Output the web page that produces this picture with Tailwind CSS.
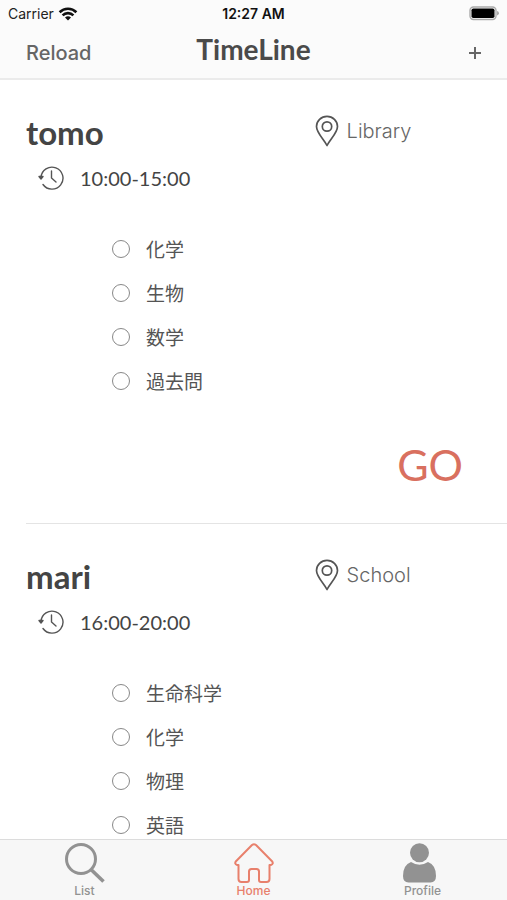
<!DOCTYPE html>
<html lang="ja">
<head>
    <meta charset="UTF-8">
    <meta name="viewport" content="width=device-width, initial-scale=1.0">
    <title>TimeLine</title>
    <script src="https://cdn.jsdelivr.net/npm/@tailwindcss/browser@4"></script>
</head>
<body class="h-screen flex flex-col bg-white text-[#555] font-['Inter','Noto_Sans_CJK_JP',sans-serif]">

    <!-- Top Bar -->
    <header class="shrink-0 bg-[#fbfbfb] border-b-2 border-[#ebebeb]">
        <div class="grid grid-cols-3 items-center h-7 pl-2 pr-2 text-sm text-[#222]">
            <div class="flex items-center gap-1">
                <span>Carrier</span>
                <svg class="w-5 h-4" viewBox="0 0 20 16" fill="none" stroke="#111" stroke-width="2.6">
                    <path d="M1.6 6.2a12 12 0 0 1 16.8 0"/>
                    <path d="M4.6 9.4a7.6 7.6 0 0 1 10.8 0"/>
                    <path d="M10 14.6l-3-3a4.3 4.3 0 0 1 6 0z" fill="#111" stroke="none"/>
                </svg>
            </div>
            <div class="text-center font-semibold text-[#111] whitespace-nowrap">12:27 AM</div>
            <svg class="justify-self-end w-[30px] h-4" viewBox="0 0 30 16">
                <rect x="1" y="1" width="26" height="12.500" rx="3.500" fill="#fbfbfb" stroke="#aaa" stroke-width="1.4"/>
                <rect x="2.500" y="2.500" width="23" height="9.500" rx="1.800" fill="#000"/>
                <path d="M28 5q2 .6 2 2.200t-2 2.200z" fill="#aaa"/>
            </svg>
        </div>
        <div class="grid grid-cols-3 items-center h-[50px] px-[26px] text-[#666]">
            <button type="button" class="justify-self-start text-xl font-medium">Reload</button>
            <h1 class="justify-self-center pb-2 text-[28px] font-bold leading-9 text-[#4a4a4a] font-['Lato',sans-serif]">TimeLine</h1>
            <button type="button" aria-label="Add" class="justify-self-end">
                <svg class="w-3 h-3" viewBox="0 0 12 12" stroke="#666" stroke-width="2">
                    <path d="M6 0v12M0 6h12"/>
                </svg>
            </button>
        </div>
    </header>

    <!-- Timeline -->
    <main class="flex-1 min-h-0 overflow-hidden pl-[26px]">
        <article class="pt-8 pb-6 border-b border-[#e4e4e4]">
            <div class="grid grid-cols-[3fr_2fr] h-11">
                <h2 class="self-start text-[33px] font-bold leading-10 text-[#444] font-['Lato',sans-serif]">tomo</h2>
                <div class="flex items-center gap-2 h-[38px] text-xl text-[#666]">
                    <svg class="w-6 h-8" viewBox="0 0 24 32" fill="none" stroke="#555" stroke-width="1.7" stroke-linejoin="round">
                        <path d="M12 30.500C9.500 25 1.500 18 1.500 11.500a10.500 10.200 0 0 1 21 0C22.500 18 14.500 25 12 30.500z"/>
                        <circle cx="12" cy="11.500" r="4.700"/>
                    </svg>
                    <span class="font-light">Library</span>
                </div>
            </div>
            <div class="flex items-center gap-4 h-11 pl-3 text-xl font-['Lato',sans-serif]">
                <svg class="w-[26px] h-[26px]" viewBox="0 0 26 26" fill="none" stroke="#555" stroke-width="1.4" stroke-linecap="round" stroke-linejoin="round">
                    <path d="M3 12.500A11 11 0 1 1 5 19.500"/>
                    <path d="M1 11.500h4L3 14z" fill="#444"/>
                    <path d="M13.500 6v7l4.500 4"/>
                </svg>
                <time class="text-[#444]">10:00-15:00</time>
            </div>
            <ul class="mt-[27px] pl-[86px] text-[19px] font-['Noto_Sans_CJK_JP',sans-serif]">
                <li><label class="flex items-center gap-4 h-11"><input type="checkbox" class="appearance-none w-[18px] h-[18px] rounded-full border border-[#888]">化学</label></li>
                <li><label class="flex items-center gap-4 h-11"><input type="checkbox" class="appearance-none w-[18px] h-[18px] rounded-full border border-[#888]">生物</label></li>
                <li><label class="flex items-center gap-4 h-11"><input type="checkbox" class="appearance-none w-[18px] h-[18px] rounded-full border border-[#888]">数学</label></li>
                <li><label class="flex items-center gap-4 h-11"><input type="checkbox" class="appearance-none w-[18px] h-[18px] rounded-full border border-[#888]">過去問</label></li>
            </ul>
            <div class="flex justify-end mt-7 pr-11">
                <button type="button" class="h-17 text-[43px] text-[#d9705f] font-['Lato',sans-serif]">GO</button>
            </div>
        </article>

        <article class="pt-8 pb-6 border-b border-[#e4e4e4]">
            <div class="grid grid-cols-[3fr_2fr] h-11">
                <h2 class="self-start text-[33px] font-bold leading-10 text-[#444] font-['Lato',sans-serif]">mari</h2>
                <div class="flex items-center gap-2 h-[38px] text-xl text-[#666]">
                    <svg class="w-6 h-8" viewBox="0 0 24 32" fill="none" stroke="#555" stroke-width="1.7" stroke-linejoin="round">
                        <path d="M12 30.500C9.500 25 1.500 18 1.500 11.500a10.500 10.200 0 0 1 21 0C22.500 18 14.500 25 12 30.500z"/>
                        <circle cx="12" cy="11.500" r="4.700"/>
                    </svg>
                    <span class="font-light">School</span>
                </div>
            </div>
            <div class="flex items-center gap-4 h-11 pl-3 text-xl font-['Lato',sans-serif]">
                <svg class="w-[26px] h-[26px]" viewBox="0 0 26 26" fill="none" stroke="#555" stroke-width="1.4" stroke-linecap="round" stroke-linejoin="round">
                    <path d="M3 12.500A11 11 0 1 1 5 19.500"/>
                    <path d="M1 11.500h4L3 14z" fill="#444"/>
                    <path d="M13.500 6v7l4.500 4"/>
                </svg>
                <time class="text-[#444]">16:00-20:00</time>
            </div>
            <ul class="mt-[27px] pl-[86px] text-[19px] font-['Noto_Sans_CJK_JP',sans-serif]">
                <li><label class="flex items-center gap-4 h-11"><input type="checkbox" class="appearance-none w-[18px] h-[18px] rounded-full border border-[#888]">生命科学</label></li>
                <li><label class="flex items-center gap-4 h-11"><input type="checkbox" class="appearance-none w-[18px] h-[18px] rounded-full border border-[#888]">化学</label></li>
                <li><label class="flex items-center gap-4 h-11"><input type="checkbox" class="appearance-none w-[18px] h-[18px] rounded-full border border-[#888]">物理</label></li>
                <li><label class="flex items-center gap-4 h-11"><input type="checkbox" class="appearance-none w-[18px] h-[18px] rounded-full border border-[#888]">英語</label></li>
            </ul>
        </article>
    </main>

    <!-- Tab Bar -->
    <nav class="shrink-0 grid grid-cols-3 h-[61px] pt-[3px] bg-[#f7f7f7] border-t border-[#dcdcdc] text-xs font-medium text-[#929292]">
        <a href="#list" class="flex flex-col items-center">
            <svg class="w-10 h-10" viewBox="0 0 40 40" fill="none" stroke="#929292">
                <circle cx="16" cy="16" r="14.500" stroke-width="3"/>
                <path d="M26 26.500L38.500 38.500" stroke-width="3.600"/>
            </svg>
            <span class="leading-4">List</span>
        </a>
        <a href="#home" class="flex flex-col items-center text-[#e8806c]">
            <svg class="w-10 h-10" viewBox="0 0 40 40" fill="none" stroke="#e8806c" stroke-width="2" stroke-linejoin="round">
                <path d="M18 2q2-1.600 4 0l16 16.200q2 2.800-1.200 3.800h-1.300v14q0 3-3 3h-5.500q-2 0-2-2v-8.500q0-2.500-2.500-2.500h-5q-2.500 0-2.500 2.500v8.500q0 2-2 2H7.500q-3 0-3-3V22H3.200Q0 21 2 18.200z"/>
            </svg>
            <span class="leading-4">Home</span>
        </a>
        <a href="#profile" class="flex flex-col items-center">
            <svg class="w-10 h-10" viewBox="0 0 40 40" fill="#929292">
                <circle cx="16.500" cy="9.800" r="9.500"/>
                <path d="M8 19Q16.500 24.500 25 19Q33 22 33 33q0 6-5.500 6.500H5.500Q0 39 0 33Q0 22 8 19z"/>
            </svg>
            <span class="leading-4">Profile</span>
        </a>
    </nav>

</body>
</html>
